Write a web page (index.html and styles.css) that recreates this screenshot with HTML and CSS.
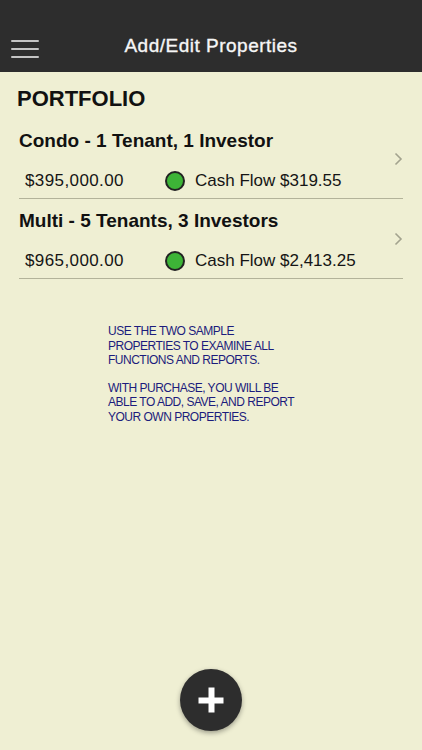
FILE: index.html
```html
<!DOCTYPE html>
<html>
<head>
<meta charset="utf-8">
<link rel="stylesheet" href="styles.css">
</head>
<body>
<div class="app">
  <header class="navbar">
    <div class="menu" aria-label="Menu"><span></span><span></span><span></span></div>
    <h1 class="title">Add/Edit Properties</h1>
  </header>
  <main class="content">
    <h2 class="section">PORTFOLIO</h2>
    <ul class="list">
      <li class="row">
        <div class="row-main">
          <div class="row-title">Condo - 1 Tenant, 1 Investor</div>
          <div class="row-values">
            <span class="price">$395,000.00</span>
            <span class="dot"></span>
            <span class="flow">Cash Flow $319.55</span>
          </div>
        </div>
        <svg class="chev" width="9" height="14" viewBox="0 0 9 14"><path d="M1.5 1.5 L7 7 L1.5 12.5" fill="none" stroke="#a3a38e" stroke-width="1.6"/></svg>
      </li>
      <li class="row">
        <div class="row-main">
          <div class="row-title">Multi - 5 Tenants, 3 Investors</div>
          <div class="row-values">
            <span class="price">$965,000.00</span>
            <span class="dot"></span>
            <span class="flow">Cash Flow $2,413.25</span>
          </div>
        </div>
        <svg class="chev" width="9" height="14" viewBox="0 0 9 14"><path d="M1.5 1.5 L7 7 L1.5 12.5" fill="none" stroke="#a3a38e" stroke-width="1.6"/></svg>
      </li>
    </ul>
    <div class="note">
      <p>USE THE TWO SAMPLE<br>PROPERTIES TO EXAMINE ALL<br>FUNCTIONS AND REPORTS.</p>
      <p>WITH PURCHASE, YOU WILL BE<br>ABLE TO ADD, SAVE, AND REPORT<br>YOUR OWN PROPERTIES.</p>
    </div>
  </main>
  <button class="fab" aria-label="Add"><span class="plus"></span></button>
</div>
</body>
</html>
```
FILE: styles.css
```css
* { box-sizing: border-box; }
html, body { margin: 0; padding: 0; }
body {
  width: 422px;
  height: 750px;
  background: #efefd3;
  font-family: "Liberation Sans", Arial, sans-serif;
  color: #111;
  overflow: hidden;
}
.app {
  position: relative;
  height: 750px;
  display: flex;
  flex-direction: column;
}
.navbar {
  height: 72px;
  background: #2d2d2d;
  display: flex;
  align-items: flex-end;
  justify-content: center;
  padding-bottom: 14px;
  position: relative;
}
.menu {
  position: absolute;
  left: 11px;
  top: 40px;
  width: 28px;
  display: flex;
  flex-direction: column;
  gap: 6.5px;
}
.menu span {
  display: block;
  height: 1.5px;
  background: #c4c4c4;
  border-radius: 1px;
}
.title {
  margin: 0;
  color: #f6f6f6;
  font-size: 19px;
  font-weight: normal;
  letter-spacing: 0.5px;
  line-height: 24px;
  -webkit-text-stroke: 0.35px #f6f6f6;
}
.content {
  padding: 13px 19px 0 17px;
}
.section {
  margin: 0;
  font-size: 22px;
  font-weight: bold;
  line-height: 28px;
  color: #111;
}
.list {
  list-style: none;
  margin: 6px 0 0 2px;
  padding: 0;
}
.row {
  height: 80px;
  border-bottom: 1px solid #b3b39a;
  display: flex;
  align-items: center;
}
.row-main {
  flex: 1;
  display: flex;
  flex-direction: column;
  margin-top: 4px;
}
.row-title {
  font-size: 19px;
  font-weight: bold;
  line-height: 22px;
}
.row-values {
  display: flex;
  align-items: center;
  margin-top: 18px;
  font-size: 17px;
  line-height: 22px;
  color: #151515;
}
.price {
  width: 146px;
  padding-left: 6px;
  letter-spacing: 0.4px;
}
.dot {
  width: 20px;
  height: 20px;
  border-radius: 50%;
  background: #3db437;
  border: 2.5px solid #222;
  margin-right: 10px;
}
.chev {
  margin-top: 0;
}
.note {
  margin: 45px 0 0 91px;
  color: #1c1c7c;
  font-size: 12px;
  line-height: 14.5px;
  letter-spacing: -0.5px;
}
.note p {
  margin: 0 0 13px 0;
}
.fab {
  position: absolute;
  left: 180px;
  top: 669px;
  width: 62px;
  height: 62px;
  border-radius: 50%;
  border: none;
  background: #2d2d2d;
  box-shadow: 0 2px 5px rgba(0,0,0,0.35);
  padding: 0;
}
.plus {
  position: absolute;
  left: 50%;
  top: 50%;
  width: 25px;
  height: 25px;
  transform: translate(-50%, -50%);
}
.plus::before, .plus::after {
  content: "";
  position: absolute;
  background: #fff;
}
.plus::before { left: 0; top: 9.5px; width: 25px; height: 6px; }
.plus::after { top: 0; left: 9.5px; width: 6px; height: 25px; }
```
